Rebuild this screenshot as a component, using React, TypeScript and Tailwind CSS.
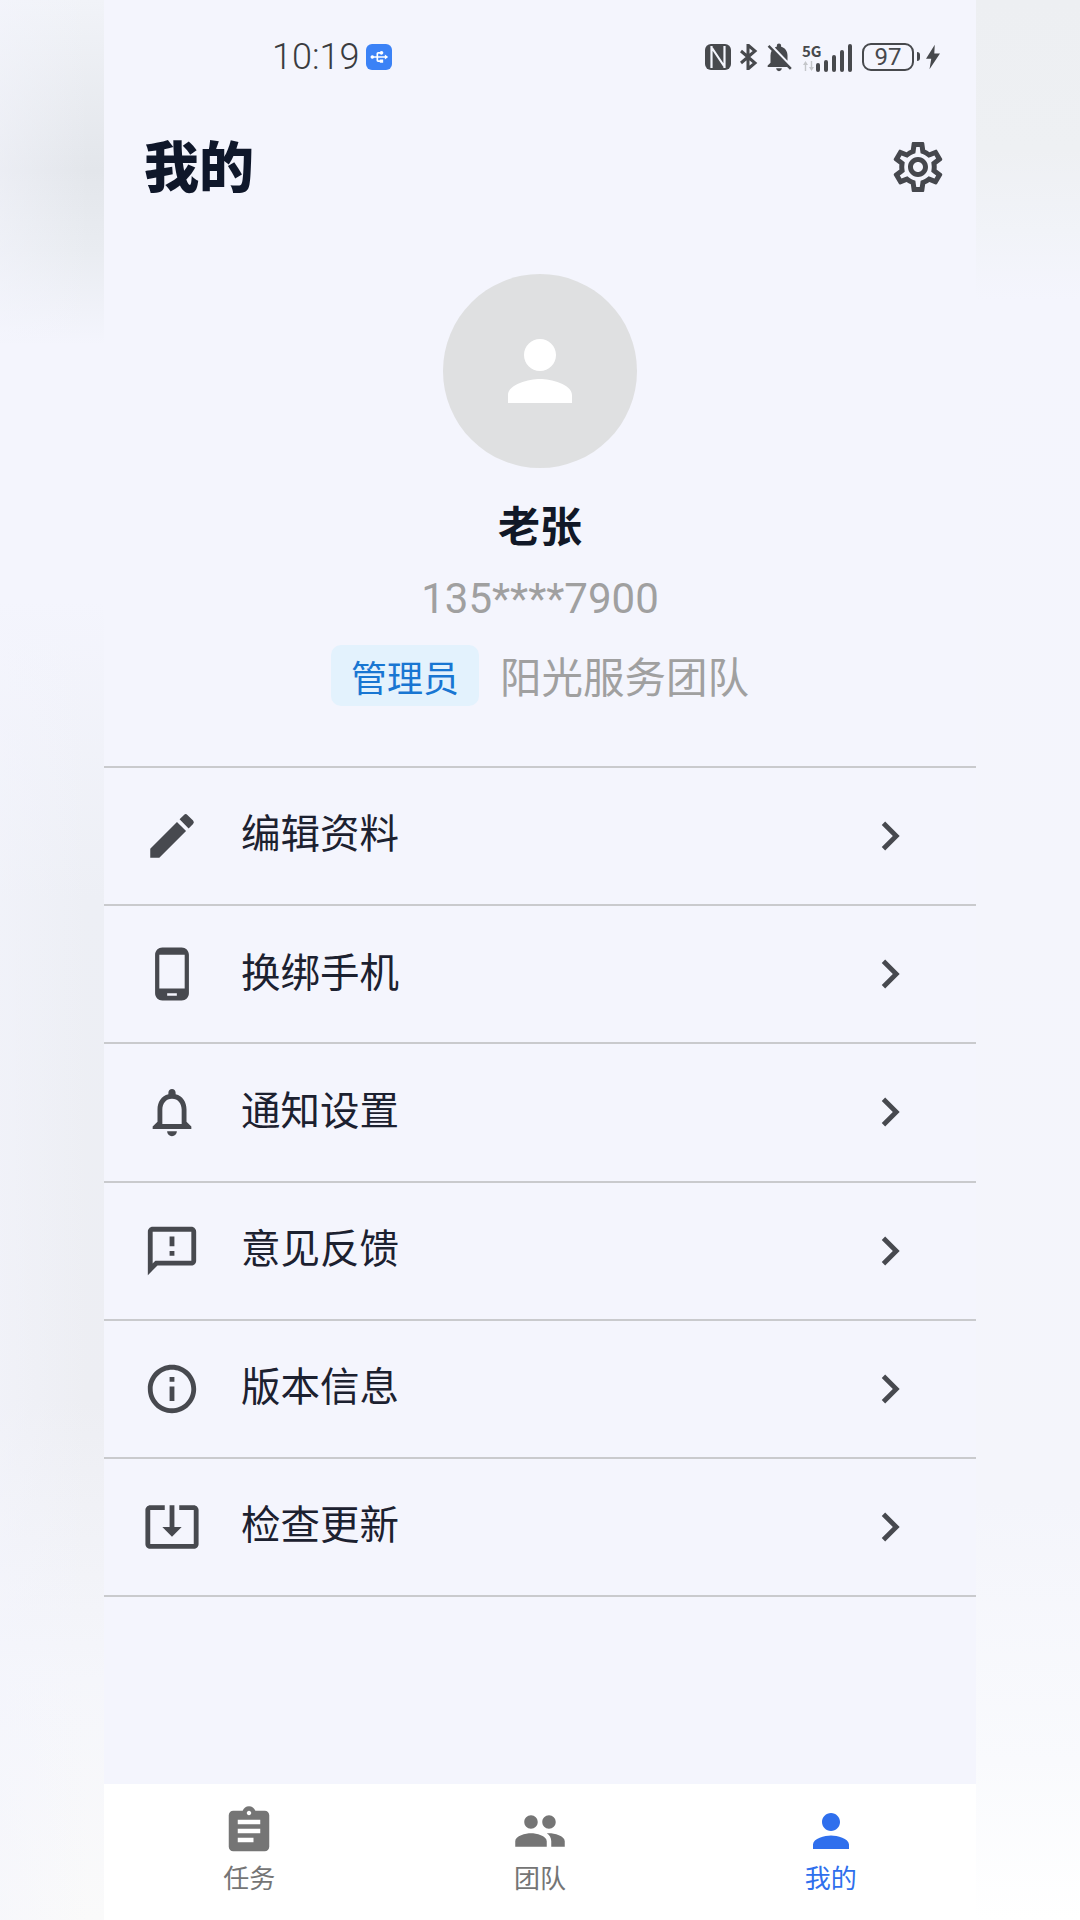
import {
  MdAssignment,
  MdChevronRight,
  MdEdit,
  MdGroup,
  MdInfoOutline,
  MdNotificationsNone,
  MdNotificationsOff,
  MdOutlineFeedback,
  MdOutlineSettings,
  MdOutlineSystemUpdateAlt,
  MdPerson,
  MdPhoneAndroid,
  MdUsb,
} from 'react-icons/md';

const menu = [
  { label: '编辑资料', Icon: MdEdit },
  { label: '换绑手机', Icon: MdPhoneAndroid },
  { label: '通知设置', Icon: MdNotificationsNone },
  { label: '意见反馈', Icon: MdOutlineFeedback },
  { label: '版本信息', Icon: MdInfoOutline },
  { label: '检查更新', Icon: MdOutlineSystemUpdateAlt },
];

const tabs = [
  { label: '任务', Icon: MdAssignment, active: false },
  { label: '团队', Icon: MdGroup, active: false },
  { label: '我的', Icon: MdPerson, active: true },
];

function StatusIcons() {
  return (
    <div className="flex h-[30px] items-center text-[#47494d]">
      <svg width="26" height="26" viewBox="0 0 26 26">
        <rect width="26" height="26" rx="6" fill="currentColor" />
        <path d="M6.5 2v22M19.5 2v22M7 4l12 18" stroke="#f4f5fd" strokeWidth="2.2" fill="none" />
      </svg>
      <svg width="20" height="26" viewBox="0 0 20 26" className="ml-[7px]">
        <path d="M3 7l14 12-7 6V1l7 6L3 19" stroke="currentColor" strokeWidth="3" fill="none" />
      </svg>
      <MdNotificationsOff size={34} className="ml-[4px]" />
      <div className="ml-[6px] flex w-[14px] flex-col self-start">
        <span className="text-[15px] leading-[17px] font-bold whitespace-nowrap">5G</span>
        <svg width="13" height="10" viewBox="0 0 13 10" className="mt-[2px] text-[#c4c6ca]">
          <path d="M3.5 0 1 4h1.8v6h1.4V4H6zM9.5 10 12 6h-1.8V0H8.800v6H7z" fill="currentColor" />
        </svg>
      </div>
      <svg width="36" height="28" viewBox="0 0 36 28" className="self-end">
        <rect x="0" y="19" width="4" height="9" rx="2" fill="currentColor" />
        <rect x="8" y="16" width="4" height="12" rx="2" fill="currentColor" />
        <rect x="16" y="11" width="4" height="17" rx="2" fill="currentColor" />
        <rect x="24" y="6" width="4" height="22" rx="2" fill="currentColor" />
        <rect x="32" y="0" width="4" height="28" rx="2" fill="currentColor" />
      </svg>
      <div className="ml-[10px] flex h-[28px] w-[52px] items-center justify-center rounded-[9px] border-2 border-[#47494d] font-[Roboto] text-[24px] leading-none">
        97
      </div>
      <div className="ml-[3px] h-[9px] w-[3px] rounded-r bg-[#47494d]" />
      <svg width="14" height="28" viewBox="0 0 16 28" className="ml-[6px]">
        <path d="M10 0 0 16h6l-2 12L16 10H9.500z" fill="currentColor" />
      </svg>
    </div>
  );
}

export default function App() {
  return (
    <div className="flex h-[1920px] w-[1080px] overflow-hidden bg-[#f4f5fd] font-['Noto_Sans_CJK_SC','Noto_Sans',sans-serif]">
      <div className="w-[104px] bg-[linear-gradient(90deg,#f4f5fd80,transparent_85%),linear-gradient(180deg,#f1f3f8_0px,#e3e6eb_170px,#e9ecf1_250px,#f4f5fd_345px,#f4f5fd_600px,#edeff5_900px,#edeef3_1400px,#f5f6fb_1680px,#fafafa_1920px)]" />

      <div className="flex w-[872px] flex-col">
        <div className="flex h-[112px] items-center pt-[1px] pr-[36px] pl-[168px]">
          <span className="font-[Roboto] text-[36px] leading-none font-light text-[#3a3c40]">10:19</span>
          <div className="ml-[7px] flex h-[26px] w-[26px] items-center justify-center rounded-[6px] bg-[#3b82f6]">
            <MdUsb size={20} className="rotate-90 text-white" />
          </div>
          <div className="ml-auto">
            <StatusIcons />
          </div>
        </div>

        <div className="flex h-[110px] items-center justify-between pr-[28px] pl-[40px]">
          <h1 className="pb-[7px] text-[55px] leading-none font-black text-[#0f172a]">我的</h1>
          <MdOutlineSettings size={60} className="text-[#45474d]" />
        </div>

        <div className="mt-[52px] flex flex-col items-center">
          <div className="flex h-[194px] w-[194px] items-center justify-center rounded-full bg-[#dfe0e1]">
            <MdPerson size={96} className="text-white" />
          </div>
          <p className="mt-[26px] text-[42px] leading-[60px] font-bold text-[#111827]">老张</p>
          <p className="mt-[20px] font-[Roboto] text-[42px] leading-[50px] text-[#a0a0a0]">135****7900</p>
          <div className="mt-[21px] flex items-center">
            <span className="flex h-[61px] items-center rounded-[10px] bg-[#e3f2fd] px-[20px] text-[36px] leading-none text-[#1976d2]">
              管理员
            </span>
            <span className="ml-[21px] text-[41.500px] leading-none text-[#a0a0a0]">阳光服务团队</span>
          </div>
        </div>

        <div className="mt-[60px] border-t-2 border-[#c9cacd]">
          {menu.map(({ label, Icon }) => (
            <div key={label} className="flex h-[138.2px] items-center border-b-2 border-[#c9cacd] pr-[57px] pl-[39px]">
              <Icon size={58} className="text-[#47494f]" />
              <span className="ml-[40px] flex-1 pb-[10px] text-[39.500px] leading-none text-[#1c2130]">{label}</span>
              <MdChevronRight size={58} className="text-[#47494f]" />
            </div>
          ))}
        </div>

        <div className="mt-auto flex h-[136px] bg-white pt-[20px]">
          {tabs.map(({ label, Icon, active }) => (
            <div key={label} className={`flex flex-1 flex-col items-center ${active ? 'text-[#2f6fed]' : 'text-[#757575]'}`}>
              <Icon size={54} />
              <span className="mt-[2px] text-[26px] leading-[34px]">{label}</span>
            </div>
          ))}
        </div>
      </div>

      <div className="flex-1 bg-[linear-gradient(180deg,#edeff2_0px,#eef0f3_150px,#f1f3f8_230px,#f4f5fd_300px,#f4f5fb_1500px,#f9fafd_1760px,#ffffff_1920px)]" />
    </div>
  );
}
